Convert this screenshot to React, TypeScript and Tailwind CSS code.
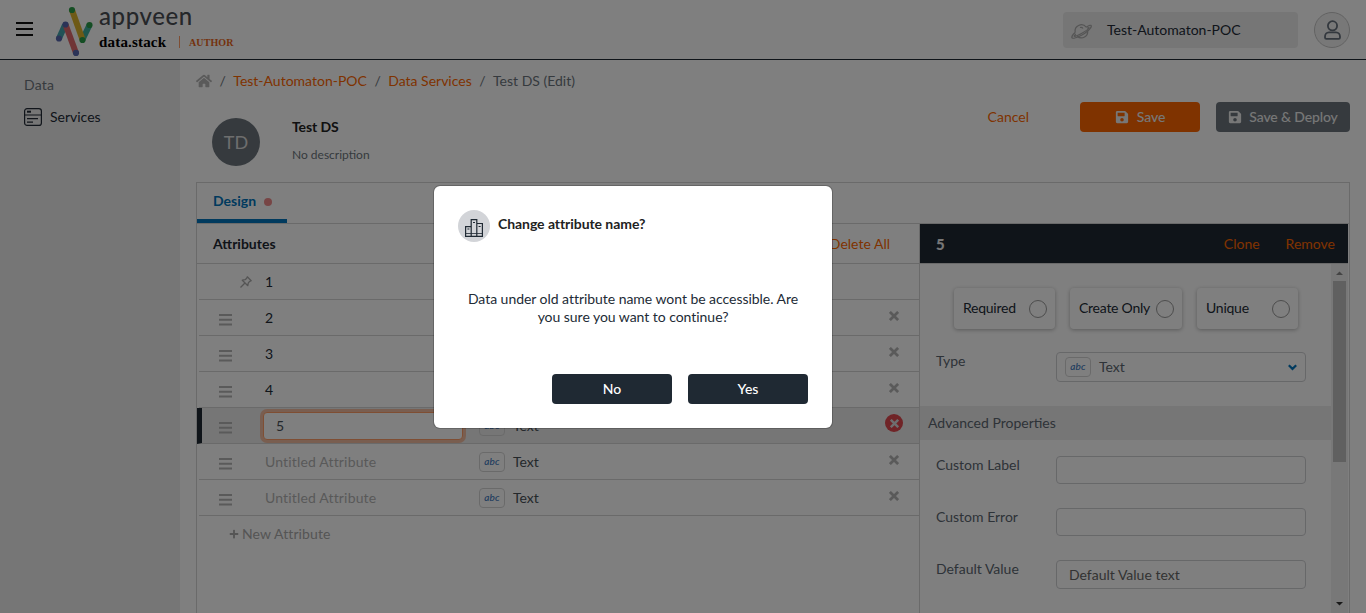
import React from "react";
import { FaHome, FaPlus, FaSave } from "react-icons/fa";

function Logo() {
  return (
    <svg width="38" height="50" viewBox="0 0 38 50" fill="none" strokeWidth="6" className="shrink-0">
      <path d="M4 32.5L10 19" stroke="#45a5ad" />
      <path d="M34.5 19L27.500 33.500" stroke="#3fae9c" />
      <path d="M17 4L27.500 33.500" stroke="#dcb52c" />
      <path d="M10.500 18.500L21 47" stroke="#e0696d" />
      <g fill="#5666ae">
        <circle cx="4" cy="32.500" r="3.100" />
        <circle cx="10.500" cy="18.500" r="3.100" />
        <circle cx="21" cy="46.900" r="3.100" />
      </g>
      <g fill="#2a9d48">
        <circle cx="17" cy="4" r="3.100" />
        <circle cx="34.500" cy="19" r="3.100" />
        <circle cx="27.500" cy="34" r="3.100" />
      </g>
    </svg>
  );
}

function Bars() {
  return (
    <svg width="17" height="15" viewBox="0 0 17 15" fill="#111">
      <path d="M0 0h17v2H0zM0 6h17v2H0zM0 12h17v2H0z" />
    </svg>
  );
}

function Grip() {
  return (
    <svg width="13" height="12" viewBox="0 0 13 12" fill="#b4b4b4">
      <path d="M0 0h13v2H0zM0 4.700h13v2H0zM0 9.400h13v2H0z" />
    </svg>
  );
}

function Cross({ size, color }: { size: number; color: string }) {
  return (
    <svg width={size} height={size} viewBox="0 0 10 10" stroke={color} strokeWidth="2.700">
      <path d="M0.900 0.900L9.100 9.100M9.100 0.900L0.900 9.100" />
    </svg>
  );
}

function ServiceIcon() {
  return (
    <svg width="18" height="18" viewBox="0 0 18 18" fill="none" stroke="#222b36" strokeWidth="1.200">
      <rect x="0.600" y="0.600" width="16.800" height="16.800" rx="2.500" />
      <path d="M0.600 7h16.800M3 10.700h11M3 14.200h6" />
      <path d="M3 3.700h4" strokeWidth="2" />
    </svg>
  );
}

function Planet() {
  return (
    <svg width="21" height="17" viewBox="0 0 21 17" fill="none" stroke="#aaa" strokeWidth="1.200" className="mt-[3px]">
      <path d="M4.300 9.500A6.200 6.200 0 0 1 15.200 4.200M16.500 7.300A6.200 6.200 0 0 1 6.300 13.200" />
      <path d="M15.200 4.200C18 2.200 20.300 1.500 20.300 3.200C20.300 5.200 15.500 9.500 10.500 12.200C5.500 15 .8 16.300 .8 14.200C.8 12.700 2.500 10.800 4.300 9.500" />
      <path d="M16.200 5.300C17.500 4.500 18.300 4.200 18 5C16.500 7.500 5.500 13.700 3.300 13.300C2.800 12.900 3.800 12 4.800 11.200" />
      <path d="M9 4.500c1.400-.3 2.500.2 3 1" />
    </svg>
  );
}

function UserIcon() {
  return (
    <svg width="17" height="20" viewBox="0 0 17 20" fill="none" stroke="#66707c" strokeWidth="1.800">
      <circle cx="8.500" cy="5.800" r="4.600" />
      <path d="M5 12.400h7c2.500 0 4 2 4 4.300v.8c0 .8-.5 1.300-1.300 1.300H2.300c-.8 0-1.300-.5-1.300-1.300v-.8c0-2.300 1.500-4.300 4-4.300z" />
    </svg>
  );
}

function Pin() {
  return (
    <svg width="12" height="12" viewBox="0 0 12 12" fill="none" stroke="#aaa" strokeWidth="1.300" strokeLinejoin="round">
      <path d="M7.300 0.800L11.200 4.700L9.800 5.300L8.300 6.900L7.800 9.700L2.300 4.200L5.100 3.700L6.700 2.200ZM4.700 7.300L0.500 11.500" />
    </svg>
  );
}

function Buildings() {
  return (
    <svg width="18" height="18" viewBox="0 0 18 18" fill="none" stroke="#1f2933" strokeWidth="1.200">
      <path d="M0.600 17.400V7.600h5.600M6.200 17.400V0.600h5.600v16.800M11.800 4.500h5.600v12.900M0 17.400h18" />
      <path d="M0.600 14.500h16.800" strokeWidth="0.800" />
      <path d="M2.400 10h2M8 3.500h2M13.600 7.500h2" />
    </svg>
  );
}

function Chip() {
  return (
    <span className="flex h-5 w-[26px] items-center justify-center rounded border border-[#d5d5d5] pb-0.5 text-[10px] font-medium italic leading-none tracking-[0.2px] text-[#3f78bd]">
      abc
    </span>
  );
}

type RowData = { name: string; kind: "fixed" | "plain" | "active" | "empty" };

const rows: RowData[] = [
  { name: "1", kind: "fixed" },
  { name: "2", kind: "plain" },
  { name: "3", kind: "plain" },
  { name: "4", kind: "plain" },
  { name: "5", kind: "active" },
  { name: "Untitled Attribute", kind: "empty" },
  { name: "Untitled Attribute", kind: "empty" },
];

function AttributeRow({ row }: { row: RowData }) {
  const active = row.kind === "active";
  return (
    <div
      className={
        active
          ? "flex h-9 items-center border-b border-l-[5px] border-b-[#d5d5d5] border-l-[#1f2933] bg-[#ececec]"
          : "ml-[2px] flex h-9 items-center border-b border-[#d5d5d5] pl-[3px]"
      }
    >
      <div className={row.kind === "fixed" ? "w-[63px] pl-[38px]" : "w-[63px] pl-[17px] pt-[5px]"}>
        {row.kind === "fixed" ? <Pin /> : <Grip />}
      </div>
      <div className="w-[214px]">
        {active ? (
          <div className="-ml-0.5 flex h-7 w-[200px] items-center rounded border border-[#ff9d66] bg-white pl-[12px] text-[#495057] shadow-[0_0_0_3px_rgba(255,120,50,0.4)]">
            5
          </div>
        ) : (
          <span className={row.kind === "empty" ? "tracking-[0.16px] text-[#b3b3b3]" : "text-[#222b36]"}>{row.name}</span>
        )}
      </div>
      <div className="flex flex-1 items-center gap-2 text-[#495057]">
        <Chip />
        <span>Text</span>
      </div>
      {row.kind !== "fixed" && (
        <div className="flex w-[50px] justify-center pb-1">
          {active ? (
            <span className="mb-px flex h-[18px] w-[18px] items-center justify-center rounded-full bg-[#e0484e] text-[#ddd]">
              <Cross size={9} color="#ddd" />
            </span>
          ) : (
            <Cross size={10} color="#b4b4b4" />
          )}
        </div>
      )}
    </div>
  );
}

function Toggle({ label, width }: { label: string; width: string }) {
  return (
    <div className={`flex h-[41px] items-center justify-between rounded pl-[9px] pr-2 text-[#222b36] shadow-[0_1px_4px_rgba(0,0,0,0.3)] ${width}`}>
      <span className="pb-0.5 tracking-[-0.25px]">{label}</span>
      <span className="h-[18px] w-[18px] shrink-0 rounded-full border border-[#999]" />
    </div>
  );
}

function Field({ label, text, height }: { label: string; text?: string; height: string }) {
  return (
    <div className="flex h-[52px] items-start pl-4">
      <span className="w-[120px]">{label}</span>
      <div className={`flex w-[250px] items-center rounded border border-[#ced0d3] pl-3 text-[#666] ${height}`}>{text}</div>
    </div>
  );
}

function Properties() {
  return (
    <section className="flex w-[428px] flex-col">
      <div className="flex h-[39px] items-center bg-[#1f2933] pl-4 pr-[13px]">
        <span className="flex-1 text-[15px] font-black text-[#eee]">5</span>
        <span className="mr-[26px] text-[#ff6600]">Clone</span>
        <span className="text-[#ff6600]">Remove</span>
      </div>
      <div className="flex flex-1 border-t border-[#d5d5d5]">
        <div className="w-[411px] text-[#5c6670]">
          <div className="flex gap-[15px] pl-[34px] pt-6">
            <Toggle label="Required" width="w-[101px]" />
            <Toggle label="Create Only" width="w-[112px]" />
            <Toggle label="Unique" width="w-[101px]" />
          </div>
          <div className="mt-[23px] flex h-[54px] items-start pl-4">
            <span className="w-[120px]">Type</span>
            <div className="flex h-[30px] w-[250px] items-center gap-2 rounded border border-[#ced0d3] px-2">
              <Chip />
              <span className="flex-1">Text</span>
              <svg width="9" height="7" viewBox="0 0 9 7" fill="none" stroke="#0074bd" strokeWidth="2.200">
                <path d="M0.800 1.200L4.500 4.900L8.200 1.200" />
              </svg>
            </div>
          </div>
          <div className="flex h-[34px] items-center bg-[#ececec] pl-2">Advanced Properties</div>
          <div className="pt-4">
            <Field label="Custom Label" height="h-7" />
            <Field label="Custom Error" height="h-7" />
            <Field label="Default Value" text="Default Value text" height="h-[29px]" />
          </div>
        </div>
        <div className="flex w-[17px] flex-col items-center bg-[#f1f1f1]">
          <svg width="17" height="17" viewBox="0 0 17 17" fill="#888"><path d="M5 11h7L8.500 7.500z" /></svg>
          <div className="h-[181px] w-[13px] bg-[#c1c1c1]" />
          <div className="flex-1" />
          <svg width="17" height="17" viewBox="0 0 17 17" fill="#333"><path d="M5 6h7L8.500 9.500z" /></svg>
        </div>
      </div>
    </section>
  );
}

function Dialog() {
  return (
    <div className="absolute inset-0 bg-black/50 pl-[433px] pt-[185px]">
      <div className="flex h-[244px] w-[400px] flex-col rounded-[7px] border border-black/20 bg-white bg-clip-padding p-6 text-[#222b36]">
        <div className="flex gap-2">
          <span className="flex h-8 w-8 items-center justify-center rounded-full bg-[#d2d4d8] pt-1">
            <Buildings />
          </span>
          <span className="pt-[5px] font-bold leading-[18px] tracking-[-0.06px] text-[#222]">Change attribute name?</span>
        </div>
        <p className="mt-12 text-center leading-[18px] tracking-[-0.04px]">
          Data under old attribute name wont be accessible. Are
          <br />
          you sure you want to continue?
        </p>
        <div className="mt-auto flex justify-end gap-4 font-medium text-white">
          <button className="h-[30px] w-[120px] rounded bg-[#1f2933]">No</button>
          <button className="h-[30px] w-[120px] rounded bg-[#1f2933]">Yes</button>
        </div>
      </div>
    </div>
  );
}

export default function App() {
  return (
    <div className="relative flex h-[613px] w-[1366px] flex-col overflow-hidden bg-white font-['Lato',sans-serif] text-[14px] leading-[18px]">
      <header className="flex h-[60px] shrink-0 items-center border-b border-[#1f2933] pl-4 pr-4">
        <Bars />
        <div className="ml-[22px] mt-[2px] flex">
          <Logo />
        </div>
        <div className="ml-[6px] flex h-full flex-1 flex-col">
          <span className="mt-[3px] text-[24px] font-medium leading-[26px] tracking-[0.600px] text-[#4b4f55]">appveen</span>
          <div className="mt-[3px] flex items-center font-['Liberation_Serif',serif] font-bold">
            <span className="w-20 text-[15px] tracking-[0.180px] text-black">data.stack</span>
            <span className="h-3 w-px bg-[#ff9d66]" />
            <span className="ml-[9px] pt-0.5 text-[10px] tracking-[0.100px] text-[#e8651a]">AUTHOR</span>
          </div>
        </div>
        <div className="flex h-9 w-[235px] items-center rounded bg-[#ececec] pl-2 text-[#222b36]">
          <Planet />
          <span className="ml-[15px]">Test-Automaton-POC</span>
        </div>
        <div className="ml-4 flex h-9 w-9 items-center justify-center rounded-full border border-[#c4c4c4] bg-[#f1f1f1]">
          <UserIcon />
        </div>
      </header>
      <div className="flex min-h-0 flex-1">
        <aside className="w-[180px] bg-[#ececec] pl-6 pt-4">
          <div className="tracking-[0.200px] text-[#6c757d]">Data</div>
          <div className="mt-[14px] flex items-center gap-2 text-[#222b36]">
            <ServiceIcon />
            Services
          </div>
        </aside>
        <main className="flex flex-1 flex-col pl-4 pr-4">
          <nav className="flex h-[42px] shrink-0 items-center gap-[7.500px] text-[#6c757d]">
            <FaHome size={16} color="#b4b4b4" />
            <span>/</span>
            <span className="text-[#ff6600]">Test-Automaton-POC</span>
            <span>/</span>
            <span className="text-[#ff6600]">Data Services</span>
            <span>/</span>
            <span>Test DS (Edit)</span>
          </nav>
          <div className="flex h-20 shrink-0 items-start pl-4">
            <span className="mt-4 flex h-12 w-12 items-center justify-center rounded-full bg-[#6c757d] text-[18px] text-[#ddd]">TD</span>
            <div className="ml-8 mt-4 flex-1">
              <div className="font-bold tracking-[-0.100px] text-[#222]">Test DS</div>
              <div className="mt-[10px] text-[12px] text-[#6c757d]">No description</div>
            </div>
            <span className="mr-[51px] mt-[6px] text-[#ff6600]">Cancel</span>
            <button className="flex h-[30px] w-[120px] items-center justify-center gap-2 rounded bg-[#ff6600] font-medium tracking-[-0.100px] text-[#eee]">
              <FaSave size={14} />
              Save
            </button>
            <button className="ml-4 flex h-[30px] w-[134px] items-center justify-center gap-[7px] rounded bg-[#6c757d] font-medium tracking-[-0.130px] text-[#eee]">
              <FaSave size={14} />
              Save &amp; Deploy
            </button>
          </div>
          <div className="flex min-h-0 flex-1 flex-col border border-b-0 border-[#d5d5d5]">
            <div className="flex h-[41px] shrink-0 border-b border-[#d5d5d5]">
              <div className="flex h-10 w-[90px] items-center gap-2 border-b-4 border-[#0074bd] pb-px pl-4 font-bold text-[#0074bd]">
                Design
                <span className="mt-[3px] h-2 w-2 rounded-full bg-[#ee8b8b]" />
              </div>
            </div>
            <div className="flex min-h-0 flex-1">
              <section className="w-[723px] border-r border-[#d5d5d5]">
                <div className="flex h-10 items-center justify-between border-b border-[#d5d5d5] pl-4 pr-[29px]">
                  <span className="font-bold text-[#1f2933]">Attributes</span>
                  <span className="text-[#ff6600]">Delete All</span>
                </div>
                {rows.map((row, i) => (
                  <AttributeRow key={i} row={row} />
                ))}
                <div className="flex h-9 items-center gap-[3px] pl-8 tracking-[0.100px] text-[#aaa]">
                  <FaPlus size={10} />
                  New Attribute
                </div>
              </section>
              <Properties />
            </div>
          </div>
        </main>
      </div>
      <Dialog />
    </div>
  );
}
